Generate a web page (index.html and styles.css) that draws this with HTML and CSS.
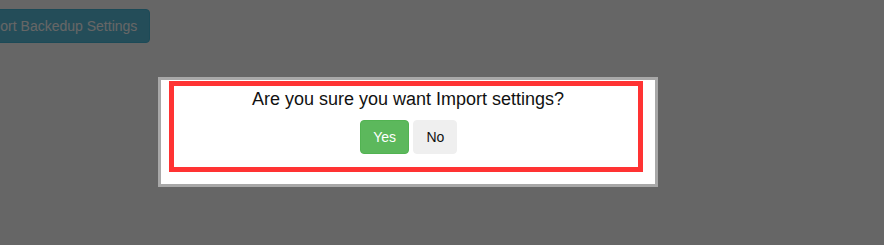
FILE: index.html
```html
<!DOCTYPE html>
<html>
<head>
<meta charset="utf-8">
<link rel="stylesheet" href="styles.css">
</head>
<body>
<div class="page">
  <button class="btn btn-info import-btn">Import Backedup Settings</button>
</div>
<div class="overlay"></div>
<div class="dialog">
  <div class="dialog-body">
    <p class="question">Are you sure you want Import settings?</p>
    <div class="actions">
      <button class="btn btn-yes">Yes</button><button class="btn btn-no">No</button>
    </div>
  </div>
  <div class="highlight"></div>
</div>
</body>
</html>
```

FILE: styles.css
```css
html, body {
  margin: 0;
  padding: 0;
  background: #ffffff;
  font-family: "Liberation Sans", Arial, sans-serif;
}
.page {
  padding-top: 9px;
}
.btn {
  display: inline-block;
  font-family: "Liberation Sans", Arial, sans-serif;
  font-size: 14px;
  line-height: 20px;
  padding: 6px 12px;
  border: 1px solid transparent;
  border-radius: 4px;
  cursor: pointer;
}
.btn-info {
  background: #5bc0de;
  border-color: #46b8da;
  color: #ffffff;
}
.import-btn {
  margin-left: -36px;
}
.overlay {
  position: fixed;
  inset: 0;
  background: rgba(0, 0, 0, 0.6);
}
.dialog {
  position: fixed;
  left: 158px;
  top: 77px;
  width: 494px;
  border: 3px solid #a8a8a8;
  background: #ffffff;
}
.dialog-body {
  padding: 9px 0 30px;
  text-align: center;
}
.question {
  margin: 0 0 11px;
  font-size: 18px;
  line-height: 20px;
  color: #111111;
}
.actions {
  display: flex;
  justify-content: center;
  gap: 4px;
  padding-left: 1px;
}
.btn-yes {
  background: #5cb85c;
  border-color: #52b352;
  color: #ffffff;
  padding: 6px 12.5px;
}
.btn-no {
  background: #efefef;
  border-color: #efefef;
  color: #111111;
}
.highlight {
  position: absolute;
  left: 8px;
  top: 1px;
  width: 464px;
  height: 81px;
  border: 5px solid #ff3333;
  pointer-events: none;
}
```
